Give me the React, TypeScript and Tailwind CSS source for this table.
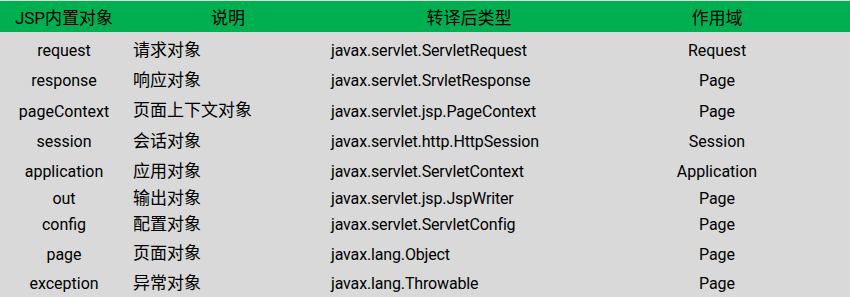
const rows: [string, string, string, string, number][] = [
  ['request', '请求对象', 'javax.servlet.ServletRequest', 'Request', 30],
  ['response', '响应对象', 'javax.servlet.SrvletResponse', 'Page', 30],
  ['pageContext', '页面上下文对象', 'javax.servlet.jsp.PageContext', 'Page', 31],
  ['session', '会话对象', 'javax.servlet.http.HttpSession', 'Session', 30],
  ['application', '应用对象', 'javax.servlet.ServletContext', 'Application', 30],
  ['out', '输出对象', 'javax.servlet.jsp.JspWriter', 'Page', 24],
  ['config', '配置对象', 'javax.servlet.ServletConfig', 'Page', 28],
  ['page', '页面对象', 'javax.lang.Object', 'Page', 31],
  ['exception', '异常对象', 'javax.lang.Throwable', 'Page', 28],
];

const font = { fontFamily: 'Roboto, "Noto Sans CJK SC", sans-serif' };

export default function App() {
  return (
    <div className="w-[850px] h-[297px] overflow-hidden bg-[#d9d9d9] pt-[1px] text-black" style={font}>
      {/* Header */}
      <div className="grid grid-cols-[128px_200px_282px_214px] h-[31px] pt-[4px] bg-[#00b050] items-center leading-none text-[17px]">
        <div className="text-center">JSP内置对象</div>
        <div className="text-center">说明</div>
        <div className="text-center">转译后类型</div>
        <div className="text-center">作用域</div>
      </div>

      {/* Body */}
      <div className="pt-[3px]">
        {rows.map(([name, desc, type, scope, h]) => (
          <div
            key={name}
            className="grid grid-cols-[128px_200px_282px_214px] items-center leading-none text-[16px]"
            style={{ height: h }}
          >
            <div className="text-center pt-[2px]">{name}</div>
            <div className="pl-[5px] text-[17px]">{desc}</div>
            <div className="pl-[3px] pt-[2px] tracking-[-0.15px]">{type}</div>
            <div className="text-center pt-[2px]">{scope}</div>
          </div>
        ))}
      </div>
    </div>
  );
}
